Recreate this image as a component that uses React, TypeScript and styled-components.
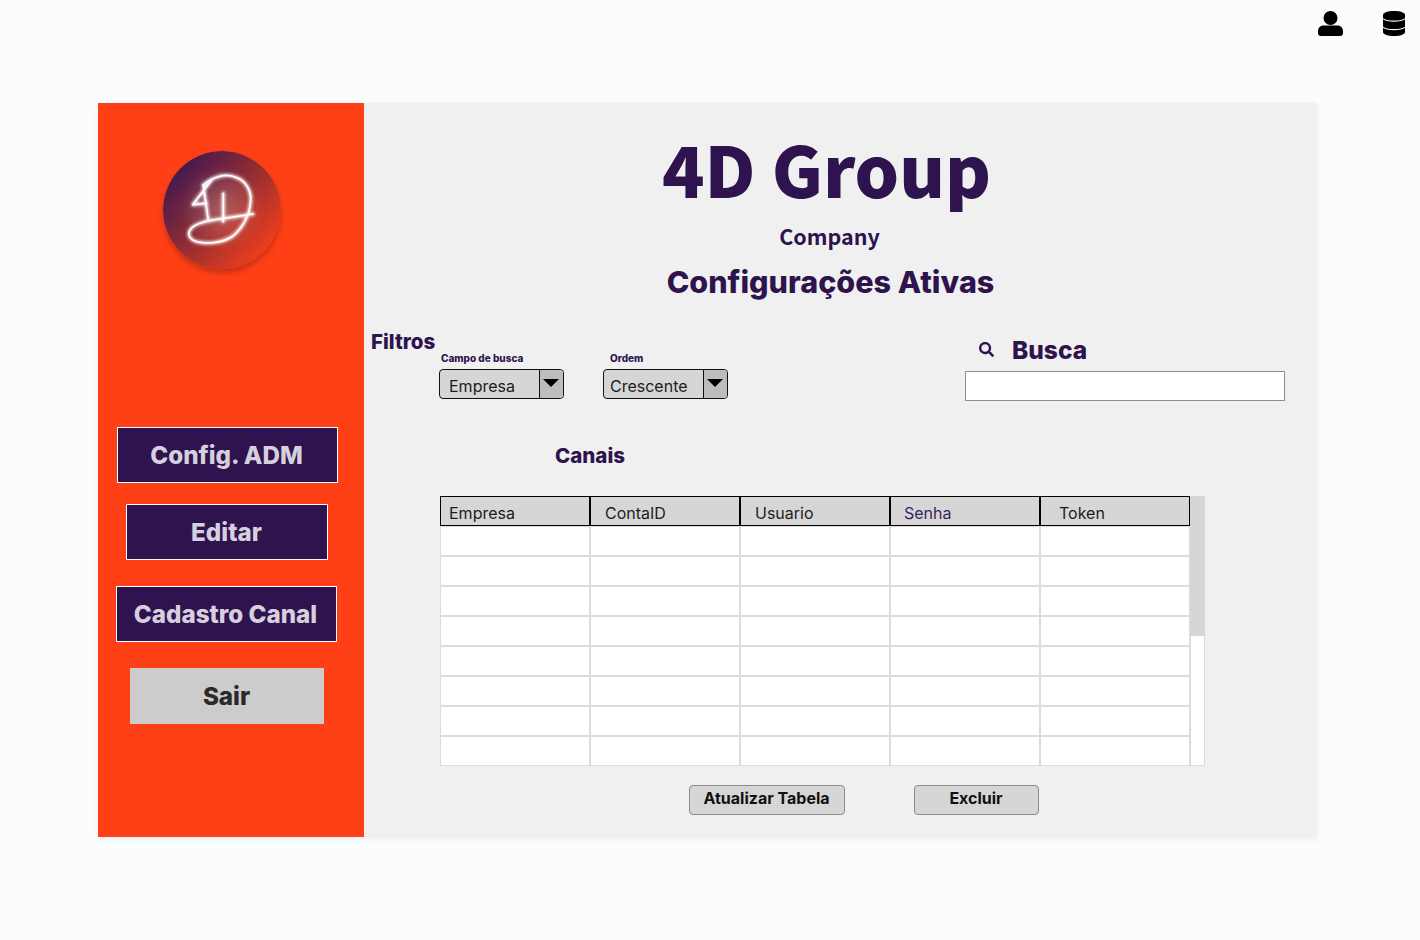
import React from "react";
import styled, { createGlobalStyle } from "styled-components";
import { FaSearch } from "react-icons/fa";

const Global = createGlobalStyle`
  html, body { margin: 0; padding: 0; background: #fbfcfe; }
  body { font-family: Inter, "Liberation Sans", sans-serif; color: #1c1c1c; }
  * { box-sizing: border-box; }
`;
const PURPLE = "#2e134e";

const Page = styled.div`
  width: 1420px;
  height: 940px;
  overflow: hidden;
`;
const TopBar = styled.header`
  height: 103px;
  display: flex;
  justify-content: flex-end;
  align-items: flex-start;
  gap: 40px;
  padding: 11px 15px 0 0;
  color: #000;
`;
const Card = styled.div`
  margin-left: 98px;
  width: 1219px;
  height: 734px;
  display: flex;
  background: #f0f0f0;
  box-shadow: 0 2px 6px rgba(0, 0, 0, 0.07);
`;
const Sidebar = styled.aside`
  width: 266px;
  flex: none;
  background: #ff3f15;
  display: flex;
  flex-direction: column;
  align-items: center;
  padding: 48px 8px 0 0;
`;
const Logo = styled.svg`
  width: 118px;
  height: 118px;
  margin-left: -10px;
  margin-bottom: 158px;
  border-radius: 50%;
  box-shadow: 0 4px 5px rgba(90, 30, 30, 0.35);
`;
const NavButton = styled.button<{ $w: number; $gap: number; $muted?: boolean; $nudge?: number }>`
  width: ${(p) => p.$w}px;
  height: 56px;
  margin-bottom: ${(p) => p.$gap}px;
  margin-right: ${(p) => p.$nudge ?? 0}px;
  background: ${(p) => (p.$muted ? "#cccccc" : PURPLE)};
  color: ${(p) => (p.$muted ? "#2a2a2a" : "#d6d0de")};
  border: ${(p) => (p.$muted ? "none" : "1px solid #fff")};
  font: 800 24.2px Inter, sans-serif;
  padding: 0 1px 0 0;
`;
const Main = styled.main`
  flex: 1;
  display: flex;
  flex-direction: column;
  min-width: 0;
`;
const Title = styled.h1`
  margin: 22px 28px 0 0;
  text-align: center;
  font: 900 70px/86px "Noto Sans CJK SC", sans-serif;
  color: ${PURPLE};
`;
const Company = styled.div`
  margin: 10px 22px 0 0;
  text-align: center;
  font: 700 21.5px/30px "Noto Sans CJK SC", sans-serif;
  color: ${PURPLE};
`;
const Subtitle = styled.h2`
  margin: 13px 20px 0 0;
  text-align: center;
  font: 800 30.5px/36px Inter, sans-serif;
  color: ${PURPLE};
`;
const FilterRow = styled.section`
  display: flex;
  align-items: flex-start;
  height: 85px;
  margin-top: 23px;
  padding-left: 7px;
`;
const FiltersTitle = styled.div`
  width: 68px;
  flex: none;
  margin-top: 7px;
  font: 800 20.5px/24px Inter, sans-serif;
  color: ${PURPLE};
`;
const FilterGroup = styled.div<{ $w: number }>`
  width: ${(p) => p.$w}px;
  flex: none;
  padding-top: 29px;
`;
const SmallLabel = styled.div<{ $indent: number }>`
  padding-left: ${(p) => p.$indent}px;
  height: 16px;
  font: 800 10px/13px Inter, sans-serif;
  color: ${PURPLE};
`;
const Select = styled.div`
  width: 125px;
  height: 30px;
  display: flex;
  border: 1px solid #111;
  border-radius: 4px;
  background: #d6d6d6;
  overflow: hidden;
  margin-top: 1px;
  font-size: 16px;
  line-height: 32px;
  color: #1c1c1c;
`;
const SelectValue = styled.div<{ $pad: number }>`
  flex: 1;
  padding-left: ${(p) => p.$pad}px;
`;
const SelectArrow = styled.div`
  width: 24px;
  flex: none;
  background: #bdbdbd;
  border-left: 1px solid #111;
  display: flex;
  align-items: center;
  justify-content: center;
  padding: 0 2px 3px 0;
  &::after {
    content: "";
    border-left: 8px solid transparent;
    border-right: 8px solid transparent;
    border-top: 8px solid #000;
  }
`;
const SearchBlock = styled.div`
  margin-left: 237px;
  width: 320px;
  flex: none;
`;
const SearchHead = styled.div`
  height: 48px;
  display: flex;
  align-items: center;
  padding: 5px 0 0 14px;
  gap: 18px;
  color: ${PURPLE};
  font: 800 24.5px/30px Inter, sans-serif;
`;
const SearchInput = styled.div`
  height: 30px;
  background: #fff;
  border: 1px solid #8e8e8e;
`;
const SectionTitle = styled.div`
  margin: 35px 0 0 191px;
  height: 26px;
  font: 800 20.5px/26px Inter, sans-serif;
  color: ${PURPLE};
`;
const TableWrap = styled.div`
  margin: 27px 0 0 76px;
  width: 765px;
  height: 270px;
  display: flex;
  background: #fff;
`;
const Grid = styled.div`
  width: 750px;
  flex: none;
  display: grid;
  grid-template-columns: repeat(5, 150px);
  grid-auto-rows: 30px;
`;
const HeadCell = styled.div<{ $pad: number; $accent?: boolean }>`
  background: #d6d6d6;
  border: 1px solid #000;
  padding-left: ${(p) => p.$pad}px;
  font-size: 16px;
  line-height: 32px;
  color: ${(p) => (p.$accent ? "#3c1e63" : "#1c1c1c")};
`;
const BodyCell = styled.div`
  background: #fff;
  border: 1px solid #dcdcdc;
`;
const Track = styled.div`
  flex: 1;
  background: #fff;
  border: 1px solid #dcdcdc;
  border-top: none;
`;
const Thumb = styled.div`
  height: 140px;
  margin: 0 -1px;
  background: #d6d6d6;
`;
const Actions = styled.div`
  display: flex;
  margin: 19px 0 0 325px;
  gap: 69px;
`;
const ActionButton = styled.button<{ $w: number }>`
  width: ${(p) => p.$w}px;
  height: 30px;
  padding: 0 1px 4px 0;
  background: #d6d6d6;
  border: 1px solid #8a8a8a;
  border-radius: 4px;
  font: 700 16px Inter, sans-serif;
  color: #111;
`;

const columns = [
  { name: "Empresa", pad: 8 },
  { name: "ContaID", pad: 14 },
  { name: "Usuario", pad: 14 },
  { name: "Senha", pad: 13, accent: true },
  { name: "Token", pad: 18 },
];

export default function App() {
  return (
    <Page>
      <Global />
      <TopBar>
        <svg width="25" height="25" viewBox="0 0 25 25" fill="currentColor">
          <circle cx="12.5" cy="7" r="7" />
          <path d="M5.5 14.5 H19.5 C23 14.5 25 17 25 20 V22 C25 23.8 23.8 25 22 25 H3 C1.2 25 0 23.8 0 22 V20 C0 17 2 14.5 5.5 14.5 Z" />
        </svg>
        <svg width="22" height="25" viewBox="0 0 22 25">
          <path
            fill="currentColor"
            d="M0 4 C0 1.5 5 0 11 0 C17 0 22 1.5 22 4 V21 C22 23.5 17 25 11 25 C5 25 0 23.5 0 21 Z"
          />
          <path
            fill="none"
            stroke="#fbfcfe"
            strokeWidth="1.1"
            d="M0 7.5 C3 11 19 11 22 7.5 M0 16 C3 19.5 19 19.5 22 16"
          />
        </svg>
      </TopBar>
      <Card>
        <Sidebar>
          <Logo viewBox="0 0 118 118">
            <defs>
              <linearGradient id="lg" x1="0.08" y1="0.1" x2="0.9" y2="0.85">
                <stop offset="0" stopColor="#3a1753" />
                <stop offset="0.55" stopColor="#9a2f30" />
                <stop offset="1" stopColor="#f13f1b" />
              </linearGradient>
              <radialGradient id="halo" cx="0.5" cy="0.48" r="0.42">
                <stop offset="0" stopColor="#ffffff" stopOpacity="0.22" />
                <stop offset="1" stopColor="#ffffff" stopOpacity="0" />
              </radialGradient>
              <filter id="glow" x="-20%" y="-20%" width="140%" height="140%">
                <feGaussianBlur stdDeviation="1.7" />
              </filter>
            </defs>
            <circle cx="59" cy="59" r="59" fill="url(#lg)" />
            <circle cx="59" cy="59" r="50" fill="url(#halo)" />
            {[0, 1].map((layer) => (
              <g
                key={layer}
                fill="none"
                stroke="#fff"
                strokeWidth={layer ? 1.6 : 3.4}
                strokeOpacity={layer ? 1 : 0.9}
                strokeLinecap="round"
                strokeLinejoin="round"
                filter={layer ? undefined : "url(#glow)"}
              >
                <path d="M48.7 29 L29.7 53.7 L43.7 52.3" />
                <path d="M40.3 34 L45.3 69" />
                <path d="M60.3 42.3 L60.3 70.7" />
                <path d="M40.3 34 C50 26 62 22 72 26 C82 29 87 38 87.7 46 C88 60 82 75 70 85 C60 92 45 93 35 91 C27 89 24 84 27 79 C31 73 40 71 50 69 L90.3 63" />
              </g>
            ))}
          </Logo>
          <NavButton $w={221} $gap={21}>Config. ADM</NavButton>
          <NavButton $w={202} $gap={26}>Editar</NavButton>
          <NavButton $w={221} $gap={26} $nudge={2}>Cadastro Canal</NavButton>
          <NavButton $w={194} $gap={0} $muted>Sair</NavButton>
        </Sidebar>
        <Main>
          <Title>4D Group</Title>
          <Company>Company</Company>
          <Subtitle>Configurações Ativas</Subtitle>
          <FilterRow>
            <FiltersTitle>Filtros</FiltersTitle>
            <FilterGroup $w={164}>
              <SmallLabel $indent={2}>Campo de busca</SmallLabel>
              <Select>
                <SelectValue $pad={9}>Empresa</SelectValue>
                <SelectArrow />
              </Select>
            </FilterGroup>
            <FilterGroup $w={125}>
              <SmallLabel $indent={7}>Ordem</SmallLabel>
              <Select>
                <SelectValue $pad={6}>Crescente</SelectValue>
                <SelectArrow />
              </Select>
            </FilterGroup>
            <SearchBlock>
              <SearchHead>
                <FaSearch size={15} />
                Busca
              </SearchHead>
              <SearchInput />
            </SearchBlock>
          </FilterRow>
          <SectionTitle>Canais</SectionTitle>
          <TableWrap>
            <Grid>
              {columns.map((c) => (
                <HeadCell key={c.name} $pad={c.pad} $accent={c.accent}>{c.name}</HeadCell>
              ))}
              {Array.from({ length: 40 }, (_, i) => (
                <BodyCell key={i} />
              ))}
            </Grid>
            <Track>
              <Thumb />
            </Track>
          </TableWrap>
          <Actions>
            <ActionButton $w={156}>Atualizar Tabela</ActionButton>
            <ActionButton $w={125}>Excluir</ActionButton>
          </Actions>
        </Main>
      </Card>
    </Page>
  );
}
